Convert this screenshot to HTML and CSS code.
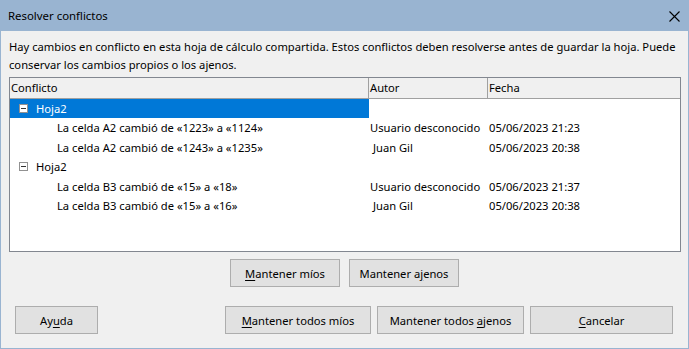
FILE: index.html
```html
<!DOCTYPE html>
<html lang="es">
<head>
<meta charset="utf-8">
<title>Resolver conflictos</title>
<link rel="stylesheet" href="styles.css">
</head>
<body>
<div class="window">
  <div class="titlebar">
    <span class="title">Resolver conflictos</span>
    <svg class="close" width="11" height="11" viewBox="0 0 11 11"><path d="M0.5 0.5 L10.5 10.5 M10.5 0.5 L0.5 10.5" stroke="#000" stroke-width="1.1" fill="none"/></svg>
  </div>
  <div class="content">
    <p class="intro"><span class="line">Hay cambios en conflicto en esta hoja de cálculo compartida. Estos conflictos deben resolverse antes de guardar la hoja. Puede</span><span class="line">conservar los cambios propios o los ajenos.</span></p>
    <div class="list">
      <div class="header row">
        <div class="hcell">Conflicto</div>
        <div class="hcell">Autor</div>
        <div class="hcell last">Fecha</div>
      </div>
      <div class="body">
        <div class="row">
          <div class="cell sel group"><span class="exp"></span>Hoja2</div>
          <div class="cell"></div>
          <div class="cell"></div>
        </div>
        <div class="row">
          <div class="cell child">La celda A2 cambió de «1223» a «1124»</div>
          <div class="cell author">Usuario desconocido</div>
          <div class="cell date">05/06/2023 21:23</div>
        </div>
        <div class="row">
          <div class="cell child">La celda A2 cambió de «1243» a «1235»</div>
          <div class="cell author">&nbsp;Juan Gil</div>
          <div class="cell date">05/06/2023 20:38</div>
        </div>
        <div class="row">
          <div class="cell group"><span class="exp"></span>Hoja2</div>
          <div class="cell"></div>
          <div class="cell"></div>
        </div>
        <div class="row">
          <div class="cell child">La celda B3 cambió de «15» a «18»</div>
          <div class="cell author">Usuario desconocido</div>
          <div class="cell date">05/06/2023 21:37</div>
        </div>
        <div class="row">
          <div class="cell child">La celda B3 cambió de «15» a «16»</div>
          <div class="cell author">&nbsp;Juan Gil</div>
          <div class="cell date">05/06/2023 20:38</div>
        </div>
      </div>
    </div>
    <div class="midbuttons">
      <button class="btn small"><u>M</u>antener míos</button>
      <button class="btn small">Mantener a<u>j</u>enos</button>
    </div>
    <div class="bottombuttons">
      <button class="btn help">Ay<u>u</u>da</button>
      <div class="rightgroup">
        <button class="btn wide"><u>M</u>antener todos míos</button>
        <button class="btn wide2">Mantener todos <u>a</u>jenos</button>
        <button class="btn wide3"><u>C</u>ancelar</button>
      </div>
    </div>
  </div>
</div>
</body>
</html>
```
FILE: styles.css
```css
* { box-sizing: border-box; }
html, body {
  margin: 0;
  padding: 0;
  width: 689px;
  height: 349px;
  overflow: hidden;
}
body {
  font-family: "Noto Sans", "Open Sans", sans-serif;
  font-size: 11.2px;
  color: #000;
  background: #f0f0f0;
}
.window {
  width: 689px;
  height: 349px;
  border: 1px solid #99b4d1;
  border-top: 0;
  background: #f0f0f0;
  display: flex;
  flex-direction: column;
}
.titlebar {
  height: 31px;
  background: #99b4d1;
  display: flex;
  align-items: center;
  justify-content: space-between;
  padding: 0 9px 0 8px;
  margin: 0 -1px;
}
.title { font-size: 11.4px; }
.close { display: block; margin-top: 1px; }
.content {
  padding: 7px 8px 0 8px;
  display: flex;
  flex-direction: column;
}
.intro { margin: 0; line-height: 18px; }
.intro .line { display: block; white-space: nowrap; }
.list {
  margin-top: 3px;
  width: 672px;
  height: 175px;
  border: 1px solid #828790;
  background: #fff;
}
.row {
  display: grid;
  grid-template-columns: 359px 119px 1fr;
  height: 19.4px;
  line-height: 19.4px;
}
.header {
  height: 21px;
  line-height: 20px;
  background: #f0f0f0;
  border-bottom: 1px solid #a0a0a0;
}
.hcell {
  padding-left: 1px;
  border-right: 1px solid #a0a0a0;
}
.hcell.last { border-right: 0; }
.body { padding-top: 0; }
.cell { white-space: nowrap; overflow: hidden; }
.cell.sel { background: #0078d7; color: #fff; }
.group { padding-left: 9px; display: flex; align-items: center; }
.exp {
  width: 9px;
  height: 9px;
  border: 1px solid #919191;
  background: #fff;
  margin-right: 8px;
  position: relative;
}
.exp::after {
  content: "";
  position: absolute;
  left: 1px;
  top: 3px;
  width: 5px;
  height: 1px;
  background: #333;
}
.child { padding-left: 47px; }
.author { padding-left: 1px; }
.date { padding-left: 1px; }
.midbuttons {
  display: flex;
  justify-content: center;
  gap: 9px;
  margin-top: 7px;
}
.btn {
  font-family: inherit;
  font-size: 11.2px;
  color: #000;
  background: #e1e1e1;
  border: 1px solid #adadad;
  height: 28px;
  padding: 0;
  margin: 0;
}
.btn u { text-decoration-thickness: 1px; text-underline-offset: 2px; }
.small { width: 110px; }
.bottombuttons {
  display: flex;
  justify-content: space-between;
  margin-top: 19px;
  padding: 0 7px 0 6px;
}
.help { width: 83px; }
.rightgroup { display: flex; gap: 6px; }
.wide { width: 146px; }
.wide2 { width: 147px; }
.wide3 { width: 143px; }
```
